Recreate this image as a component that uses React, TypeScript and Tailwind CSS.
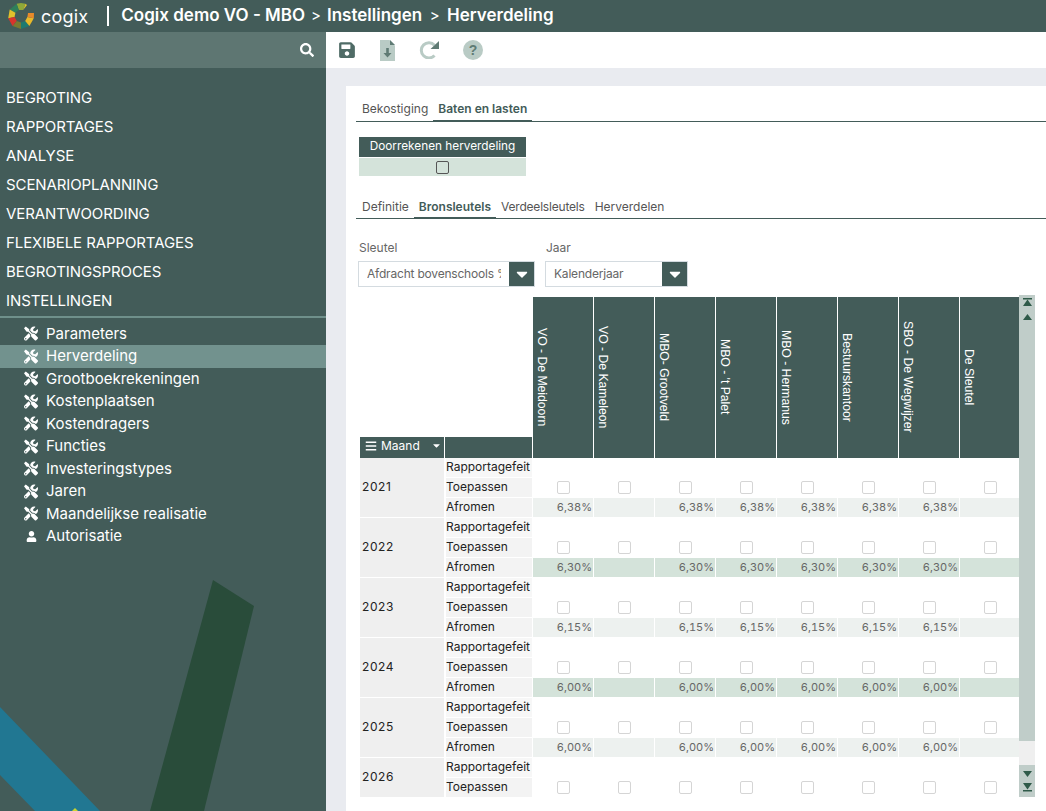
import { FaBars, FaCaretDown, FaSave, FaSearch, FaTools, FaUser } from "react-icons/fa";

const mainItems = [
  "BEGROTING",
  "RAPPORTAGES",
  "ANALYSE",
  "SCENARIOPLANNING",
  "VERANTWOORDING",
  "FLEXIBELE RAPPORTAGES",
  "BEGROTINGSPROCES",
  "INSTELLINGEN",
];

const subItems = [
  "Parameters",
  "Herverdeling",
  "Grootboekrekeningen",
  "Kostenplaatsen",
  "Kostendragers",
  "Functies",
  "Investeringstypes",
  "Jaren",
  "Maandelijkse realisatie",
  "Autorisatie",
];

const columns = [
  { name: "VO - De Meidoorn", empty: false },
  { name: "VO - De Kameleon", empty: true },
  { name: "MBO- Grootveld", empty: false },
  { name: "MBO - 't Palet", empty: false },
  { name: "MBO - Hermanus", empty: false },
  { name: "Bestuurskantoor", empty: false },
  { name: "SBO - De Wegwijzer", empty: false },
  { name: "De Sleutel", empty: true },
];

const years = [
  { year: "2021", value: "6,38%", green: false },
  { year: "2022", value: "6,30%", green: true },
  { year: "2023", value: "6,15%", green: false },
  { year: "2024", value: "6,00%", green: true },
  { year: "2025", value: "6,00%", green: false },
  { year: "2026", value: "", green: true },
];

function Logo() {
  return (
    <svg width="26" height="26" viewBox="0 0 26 26" className="shrink-0">
      <polygon points="8.6,0.8 13,0 17.4,0.8 15.2,6.9 10.8,6.9" fill="#8ea83a" />
      <polygon points="17.4,0.8 19,2 15.2,6.9" fill="#e0c02c" />
      <polygon points="8.6,0.8 10.8,6.9 7.4,9.75 1.7,6.5" fill="#2f7f5a" />
      <polygon points="1.7,6.5 7.4,9.75 6.6,14.1 0.2,15.3" fill="#e0c02c" />
      <polygon points="0.2,15.3 6.6,14.1 8.8,18 4.6,23" fill="#d8342c" />
      <polygon points="4.6,23 8.8,18 13,19.5 13,26" fill="#7a7a30" />
      <polygon points="13,19.5 17.2,18 21.4,23 13,26" fill="#1f7a6f" />
      <polygon points="17.2,18 19.4,14.1 25.8,15.3 21.4,23" fill="#e8b92a" />
      <polygon points="19.4,14.1 20,10 26,10 25.8,15.3" fill="#e88a2a" />
    </svg>
  );
}

function Dropdown({ label, value, width }: { label: string; value: string; width: string }) {
  return (
    <div className={width}>
      <div className="h-[26px] pl-px text-[12px] leading-[26px] text-[#666]">{label}</div>
      <div className="flex h-[26px] border border-[#d4dbe0]">
        <div className="min-w-0 flex-1 px-2">
          <div className="overflow-hidden whitespace-nowrap text-[12px] leading-[24px] tracking-[-0.2px] text-[#666]">{value}</div>
        </div>
        <div className="flex w-[25px] shrink-0 items-center justify-center bg-[#435c59]">
          <FaCaretDown className="text-[18px] text-white" />
        </div>
      </div>
    </div>
  );
}

function Checkbox() {
  return <span className="block h-[13px] w-[13px] rounded-[2px] border border-[#d5d5d5] bg-white" />;
}

function YearBlock({ year, value, green }: { year: string; value: string; green: boolean }) {
  const rowBg = green ? "bg-[#d4e3da]" : "bg-[#edf1ef]";
  // the last year is cut off by the scroll area, only two rows are visible
  const cut = value === "";
  return (
    <div className={`flex shrink-0 gap-px ${cut ? "h-[40px]" : "h-[60px]"}`}>
      <div className="flex w-[84px] shrink-0 items-center border-b border-white bg-[#efefef] pb-px pl-[2px] text-[12px] tracking-[0.6px] text-[#222]">
        {year}
      </div>
      <div className="flex w-[87px] shrink-0 flex-col pl-px text-[12px] text-[#222]">
        <div className="h-5 border-b border-white bg-[#f7f7f7] leading-[18px]">Rapportagefeit</div>
        <div className="h-5 border-b border-white bg-[#f3f3f3] leading-[18px]">Toepassen</div>
        {!cut && <div className="h-5 border-b border-white bg-[#f3f3f3] leading-[18px]">Afromen</div>}
      </div>
      <div className="flex flex-col">
        <div className="h-5" />
        <div className="grid h-5 grid-cols-[repeat(8,61px)]">
          {columns.map((c) => (
            <div key={c.name} className="flex items-center justify-center pb-[2px]">
              <Checkbox />
            </div>
          ))}
        </div>
        {!cut && (
          <div className="grid h-5 grid-cols-[repeat(8,61px)]">
            {columns.map((c) => (
              <div
                key={c.name}
                className={`border-r border-b border-white pr-[1px] text-right text-[11px] leading-[19px] text-[#666] tabular-nums ${rowBg}`}
              >
                {c.empty ? "" : value}
              </div>
            ))}
          </div>
        )}
      </div>
    </div>
  );
}

export default function App() {
  return (
    <div className="flex h-[811px] w-[1046px] flex-col overflow-hidden bg-[#e9ebf0] font-['Inter','Liberation_Sans',sans-serif]">
      {/* top bar */}
      <div className="flex h-8 shrink-0 items-center bg-[#435c59] pl-[8px] text-white">
        <Logo />
        <span className="ml-[7px] text-[18px] tracking-[0.2px]">cogix</span>
        <span className="ml-[19px] h-[20px] w-[2px] bg-white" />
        <span className="ml-[12px] whitespace-nowrap text-[17px] font-semibold">Cogix demo VO - MBO</span>
        <span className="mx-[6px] text-[15px]">&gt;</span>
        <span className="whitespace-nowrap text-[17px] font-semibold">Instellingen</span>
        <span className="mx-[7.5px] text-[15px]">&gt;</span>
        <span className="whitespace-nowrap text-[17px] font-semibold">Herverdeling</span>
      </div>

      <div className="flex min-h-0 flex-1">
        {/* sidebar */}
        <aside className="relative w-[326px] shrink-0 overflow-hidden bg-[#435c59] text-white">
          <svg className="absolute left-0 top-0" width="326" height="779" viewBox="0 32 326 779">
            <polygon points="213,580 254,606 204,811 150,811" fill="#294c3a" />
            <polygon points="0,707 100,811 35,811 0,775" fill="#217792" />
            <polygon points="72,811 75,808 78,811" fill="#c8d42e" />
          </svg>
          <div className="relative">
            <div className="flex h-9 items-center justify-end bg-[#5e7672] pr-[12px]">
              <FaSearch className="text-[14px] text-white" />
            </div>
            <nav className="pb-px pt-[15px]">
              {mainItems.map((item) => (
                <div key={item} className="h-[29px] pl-[6px] text-[15px] leading-[29px] tracking-[-0.1px]">
                  {item}
                </div>
              ))}
            </nav>
            <div className="h-[2px] bg-[#6f908b]" />
            <div className="pt-[4.5px]">
              {subItems.map((item) => (
                <div
                  key={item}
                  className={`flex h-[22.5px] items-center gap-[8px] pl-[24px] text-[15px] ${item === "Herverdeling" ? "bg-[#72928e]" : ""}`}
                >
                  <span className="flex w-[14px] justify-center">
                    {item === "Autorisatie" ? <FaUser className="text-[11px]" /> : <FaTools className="text-[15px]" />}
                  </span>
                  <span>{item}</span>
                </div>
              ))}
            </div>
          </div>
        </aside>

        {/* main */}
        <main className="flex min-w-0 flex-1 flex-col">
          <div className="flex h-9 shrink-0 items-center gap-[24px] bg-white pl-[12px]">
            <FaSave className="text-[18px] text-[#4f6b66]" />
            <svg width="15" height="21" viewBox="0 0 15 21">
              <path d="M0 0 H9.5 L15 5.5 V21 H0 Z" fill="#b9cbc5" />
              <path d="M10 0 L15 5 H10 Z" fill="#5f7b74" />
              <rect x="6.2" y="8" width="2.6" height="6" fill="#5f7b74" />
              <polygon points="3.5,13 11.5,13 7.5,17.5" fill="#5f7b74" />
            </svg>
            <svg width="20" height="18" viewBox="0 0 20 18">
              <path d="M15.5 4.2 A7.6 7.6 0 1 0 15.5 14.5" fill="none" stroke="#b9cbc5" strokeWidth="3" />
              <polygon points="20,0 20,8 11.5,8" fill="#5f7b74" />
            </svg>
            <svg width="20" height="20" viewBox="0 0 20 20">
              <circle cx="10" cy="10" r="10" fill="#b9cbc5" />
              <text x="10" y="15" textAnchor="middle" fontSize="14" fontWeight="700" fill="#5f7b74" fontFamily="Liberation Sans, sans-serif">
                ?
              </text>
            </svg>
          </div>

          <div className="ml-[20px] mt-[18px] flex min-h-0 flex-1 flex-col bg-white pl-[10px] pt-[13px] text-[#444]">
            {/* outer tabs */}
            <div className="flex h-[23px] shrink-0 border-b border-[#435c59] text-[12px]">
              <div className="pl-[6px] pr-[5px] leading-[20px] text-[#555]">Bekostiging</div>
              <div className="h-[23px] border-b-[2px] border-[#435c59] px-[5px] font-semibold leading-[20px] text-[#435c59]">
                Baten en lasten
              </div>
            </div>

            <div className="ml-[3px] mt-[15px] w-[167px] shrink-0">
              <div className="h-5 bg-[#435c59] text-center text-[11.8px] leading-[18px] text-white">
                Doorrekenen herverdeling
              </div>
              <div className="flex h-[19px] items-center justify-center border-t border-white bg-[#d4e3da]">
                <span className="block h-[13px] w-[13px] rounded-[2px] border border-[#555]" />
              </div>
            </div>

            {/* inner tabs */}
            <div className="mt-[19px] flex h-[24px] shrink-0 border-b border-[#435c59] text-[12px]">
              <div className="pl-[6px] pr-[5px] leading-[23px] text-[#555]">Definitie</div>
              <div className="h-[24px] border-b-[2px] border-[#435c59] px-[5px] font-semibold leading-[23px] text-[#435c59]">
                Bronsleutels
              </div>
              <div className="px-[5px] leading-[23px] tracking-[-0.2px] text-[#555]">Verdeelsleutels</div>
              <div className="px-[5px] leading-[23px] text-[#555]">Herverdelen</div>
            </div>

            <div className="ml-[2px] mt-[16px] flex shrink-0 gap-[10px]">
              <Dropdown label="Sleutel" value="Afdracht bovenschools %" width="w-[177px]" />
              <Dropdown label="Jaar" value="Kalenderjaar" width="w-[143px]" />
            </div>

            {/* table */}
            <div className="ml-[4px] mt-[8px] flex h-[502px] shrink-0">
              <div className="flex w-[659px] shrink-0 flex-col overflow-hidden pt-[2px]">
                <div className="flex h-[161px] shrink-0 items-end gap-px">
                  <div className="flex h-[21px] w-[84px] shrink-0 items-center gap-[4px] bg-[#435c59] pb-[4px] pl-[5px] text-[12px] text-white">
                    <FaBars className="text-[12px]" />
                    <span>Maand</span>
                    <FaCaretDown className="ml-[7px] text-[11px]" />
                  </div>
                  <div className="h-[21px] w-[87px] shrink-0 bg-[#435c59]" />
                  <div className="grid h-[161px] grid-cols-[repeat(8,61px)]">
                    {columns.map((c) => (
                      <div key={c.name} className="flex items-center border-r border-white bg-[#435c59] pb-px pl-[3px]">
                        <span className="whitespace-nowrap font-['Liberation_Sans',sans-serif] text-[12.2px] leading-none text-white [writing-mode:vertical-rl]">
                          {c.name}
                        </span>
                      </div>
                    ))}
                  </div>
                </div>
                {years.map((y) => (
                  <YearBlock key={y.year} year={y.year} value={y.value} green={y.green} />
                ))}
              </div>

              {/* scrollbar */}
              <div className="flex w-[16px] shrink-0 flex-col bg-[#efefef]">
                <div className="flex h-[446px] flex-col items-center bg-[#c0cdc9] pt-[3px] text-[#2f5a49]">
                  <svg width="11" height="9" viewBox="0 0 11 9" fill="currentColor">
                    <rect x="1" y="0" width="9" height="1.5" />
                    <polygon points="5.5,1.5 10,8 1,8" />
                  </svg>
                  <svg className="mt-[7px]" width="11" height="7" viewBox="0 0 11 7" fill="currentColor">
                    <polygon points="5.5,0 10,6 1,6" />
                  </svg>
                </div>
                <div className="mt-auto flex h-[32px] flex-col items-center bg-[#c0cdc9] pt-[6px] text-[#2f5a49]">
                  <svg width="11" height="7" viewBox="0 0 11 7" fill="currentColor">
                    <polygon points="1,0 10,0 5.5,6" />
                  </svg>
                  <svg className="mt-[5px]" width="11" height="9" viewBox="0 0 11 9" fill="currentColor">
                    <polygon points="1,0 10,0 5.5,6.5" />
                    <rect x="1" y="7" width="9" height="1.5" />
                  </svg>
                </div>
              </div>
            </div>
          </div>
        </main>
      </div>
    </div>
  );
}
